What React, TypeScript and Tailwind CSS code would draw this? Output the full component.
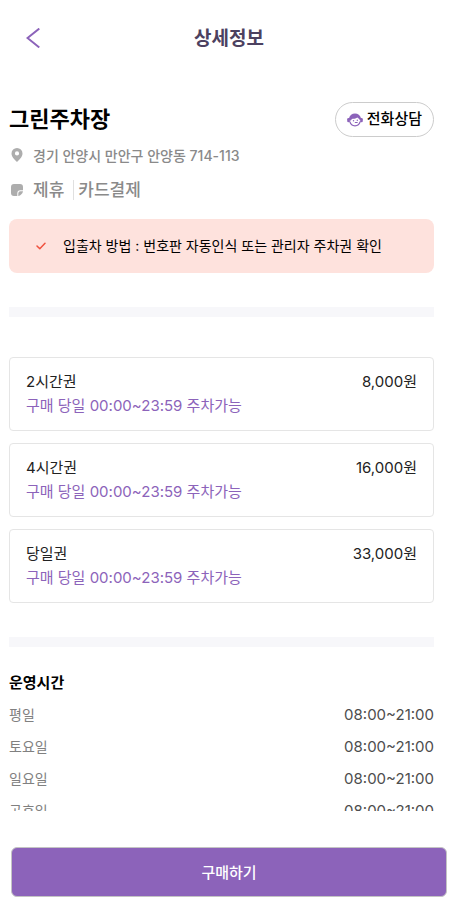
import React, { useState } from "react";

interface Ticket {
  name: string;
  price: string;
  note: string;
}

const TICKETS: Ticket[] = [
  { name: "2시간권", price: "8,000원", note: "구매 당일 00:00~23:59 주차가능" },
  { name: "4시간권", price: "16,000원", note: "구매 당일 00:00~23:59 주차가능" },
  { name: "당일권", price: "33,000원", note: "구매 당일 00:00~23:59 주차가능" },
];

const HOURS = [
  { day: "평일", time: "08:00~21:00" },
  { day: "토요일", time: "08:00~21:00" },
  { day: "일요일", time: "08:00~21:00" },
  { day: "공휴일", time: "08:00~21:00" },
];

const BackIcon = () => (
  <svg width="14" height="20" viewBox="0 0 14 20" fill="none" stroke="#8c63ba" strokeWidth="2" strokeLinecap="square">
    <path d="M12.5 1.200 1.500 10l11 8.800" />
  </svg>
);

const PinIcon = () => (
  <svg width="12" height="14" viewBox="0 0 12 14" fill="#adadad">
    <path fillRule="evenodd" d="M6 0a5.5 5.5 0 0 0-5.500 5.500C.5 8.800 3.300 11.200 6 14c2.700-2.800 5.500-5.200 5.500-8.500A5.500 5.500 0 0 0 6 0Zm0 3.300a2.100 2.100 0 1 1 0 4.200 2.100 2.100 0 0 1 0-4.200Z" />
  </svg>
);

const NoteIcon = () => (
  <svg width="12" height="12" viewBox="0 0 12 12" fill="#adadad">
    <path d="M3 0h6a3 3 0 0 1 3 3v3.300H9.300a3 3 0 0 0-3 3V12H3a3 3 0 0 1-3-3V3a3 3 0 0 1 3-3Z" />
    <path d="M7.300 12V9.400a2.100 2.100 0 0 1 2.100-2.100H12c-.3 2.300-2.400 4.400-4.700 4.700Z" />
  </svg>
);

const AgentIcon = () => (
  <svg width="16" height="14" viewBox="0 0 16 14" fill="none">
    <path fill="#8c63ba" d="M2 5.300C2.700 2.200 5.100.6 8 .6s5.300 1.600 6 4.700v1.500h-1.400c-.6-1-1.300-1.800-2.300-2.300-1.100.9-2.500 1.300-4 1.300-1.200 0-2 .6-2.400 1.700H2V5.300Z" />
    <rect x="0.2" y="5" width="2.6" height="4.200" rx="1.300" fill="#8c63ba" />
    <rect x="13.200" y="5" width="2.600" height="4.200" rx="1.300" fill="#8c63ba" />
    <path stroke="#8c63ba" strokeWidth="1.200" strokeLinecap="round" d="M2.800 8.700c.7 2.500 2.700 4.100 5.200 4.100s4.500-1.600 5.200-4.100" />
    <path stroke="#8c63ba" strokeWidth="1.200" strokeLinecap="round" d="M8.300 9.500h1.900" />
    <circle cx="6.500" cy="7.800" r="0.700" fill="#8c63ba" />
    <circle cx="10.300" cy="7.200" r="0.700" fill="#8c63ba" />
  </svg>
);

const CheckIcon = () => (
  <svg width="10" height="8" viewBox="0 0 10 8" fill="none" stroke="#f0523f" strokeWidth="1.5" strokeLinecap="round" strokeLinejoin="round">
    <path d="m1 4 2.800 2.800L9 1.300" />
  </svg>
);

const Divider = () => <div className="h-[10px] bg-[#f7f7fa]" />;

export default function App() {
  const [selected, setSelected] = useState<number | null>(null);

  return (
    <div className="flex h-screen flex-col bg-white font-['Inter','Noto_Sans_CJK_KR',sans-serif] text-black">
      <header className="grid h-[76px] shrink-0 grid-cols-[1fr_auto_1fr] items-center pr-[22px] pl-[26px]">
        <button type="button" aria-label="뒤로" className="justify-self-start">
          <BackIcon />
        </button>
        <h1 className="pt-px text-[19px] leading-6 font-bold text-[#4c4160]">상세정보</h1>
      </header>

      <main className="min-h-0 flex-1 overflow-y-auto pr-5 pl-[9px] [scrollbar-width:none]">
        <section className="pt-[26px]">
          <div className="flex items-center justify-between">
            <h2 className="pb-[2px] text-[22px] leading-8 font-semibold">그린주차장</h2>
            <button
              type="button"
              className="flex h-[35px] items-center gap-1 rounded-full border border-[#cccccc] px-[11px] text-[15px] font-medium"
            >
              <AgentIcon />
              전화상담
            </button>
          </div>
          <div className="mt-[6px] flex h-6 items-center gap-2 text-[14px] font-medium text-[#8a8a8a]">
            <span className="flex w-4 justify-center">
              <PinIcon />
            </span>
            <p>경기 안양시 만안구 안양동 714-113</p>
          </div>
          <div className="mt-[11px] flex h-6 items-center gap-2 text-[17px] font-medium text-[#8a8a8a]">
            <span className="flex w-4 justify-center">
              <NoteIcon />
            </span>
            <ul className="flex items-center leading-5">
              <li className="border-r border-[#e0e0e0] pr-[9px]">제휴</li>
              <li className="pl-1">카드결제</li>
            </ul>
          </div>
          <div className="mt-[17px] flex h-[54px] items-center gap-[17px] rounded-lg bg-[#fee2dd] px-[27px] text-[14px]">
            <CheckIcon />
            <p className="pb-[2px]">입출차 방법 : 번호판 자동인식 또는 관리자 주차권 확인</p>
          </div>
        </section>

        <div className="mt-[34px] mb-10">
          <Divider />
        </div>

        <ul className="flex flex-col gap-3">
          {TICKETS.map((ticket, index) => (
            <li key={ticket.name}>
              <button
                type="button"
                aria-pressed={selected === index}
                onClick={() => setSelected(index)}
                className="block w-full rounded border border-[#e5e5e5] px-4 py-3 text-left text-[15px] leading-6"
              >
                <span className="flex justify-between text-[#222222]">
                  <span>{ticket.name}</span>
                  <span>{ticket.price}</span>
                </span>
                <span className="block text-[#8c63ba]">{ticket.note}</span>
              </button>
            </li>
          ))}
        </ul>

        <div className="mt-[34px] mb-6">
          <Divider />
        </div>

        <section className="pb-6">
          <h3 className="text-[15px] leading-6 font-bold">운영시간</h3>
          <dl className="mt-2 flex flex-col gap-2 text-[14px] leading-6">
            {HOURS.map((row) => (
              <div key={row.day} className="flex justify-between">
                <dt className="text-[#808080]">{row.day}</dt>
                <dd className="text-[15px] text-[#4d4d4d]">{row.time}</dd>
              </div>
            ))}
          </dl>
        </section>
      </main>

      <footer className="shrink-0 pt-9 pr-[7px] pb-[6px] pl-[11px]">
        <button
          type="button"
          className="h-[50px] w-full rounded-md border border-[#c4c4c4] bg-[#8c63ba] pt-[2px] text-[15px] font-medium text-white"
        >
          구매하기
        </button>
      </footer>
    </div>
  );
}
